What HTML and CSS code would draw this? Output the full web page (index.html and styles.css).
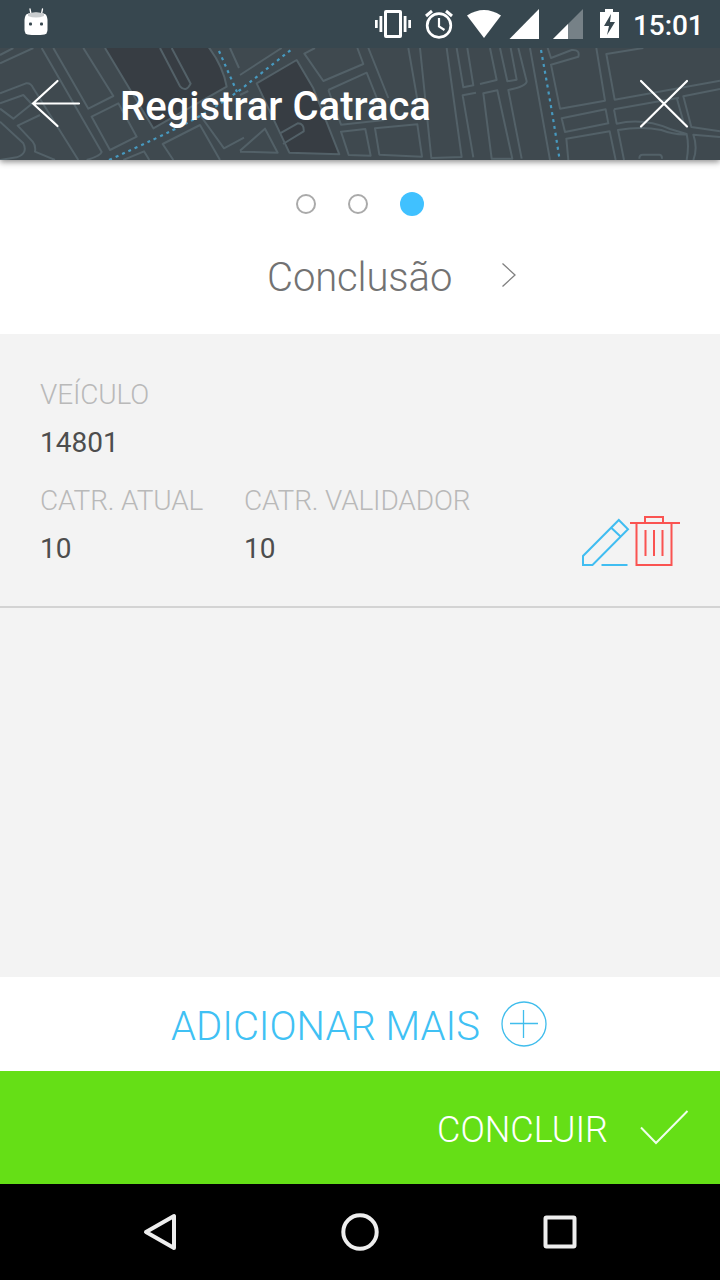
FILE: index.html
```html
<!DOCTYPE html>
<html lang="pt-BR">
<head>
<meta charset="utf-8">
<title>Registrar Catraca</title>
<link rel="stylesheet" href="styles.css">
</head>
<body>
<div class="screen">
  <div class="status-bar">
    <svg class="robot" width="24" height="28" viewBox="24 8 24 28">
      <path d="M30 9l1 5M42.500 9l-1 5" stroke="#fff" stroke-width="1.300" stroke-linecap="round"/>
      <path d="M27 14q9-3 18 0 2 1 2.500 6v10q-.5 4-3 4.500-8.500 1.200-17 0-2.500-.5-3-4.500V20q.5-5 2.500-6z" fill="#fff"/>
      <path d="M28 13.500q8-2 16 0v2.500q-8 3-16 0z" fill="#c9cdcf"/>
      <rect x="29" y="22.500" width="3" height="3" rx="1" fill="#37474f"/><rect x="40" y="22.500" width="3" height="3" rx="1" fill="#37474f"/>
    </svg>
    <svg class="status-icons" width="250" height="48" viewBox="372 0 250 48" fill="#fff">
      <path fill-rule="evenodd" d="M386 10h14a2 2 0 0 1 2 2v24a2 2 0 0 1-2 2h-14a2 2 0 0 1-2-2V12a2 2 0 0 1 2-2zm1 3v22h12V13z"/>
      <path d="M379.500 16h2.800v16h-2.800zM375 20h2.700v8H375zM403.700 16h2.800v16h-2.800zM408.300 20h2.700v8h-2.700z"/>
      <g fill="none" stroke="#fff"><circle cx="439" cy="25.500" r="11.800" stroke-width="2.700"/><path d="M439 18v8.500l5.500 3.500" stroke-width="2.200"/><path d="M426 16l6-5M452 16l-6-5" stroke-width="3"/></g>
      <path d="M467 15.500Q484 4.500 501 15.500L484 38z"/>
      <path d="M509.500 39H539V9z"/>
      <path d="M553 39h30V9z" fill="#768187"/><path d="M553 39h15V24z"/>
      <path fill-rule="evenodd" d="M605 9h8v3h6v26h-19V12h5zm6 5l-7 12h5l-2 9 8-13h-5z"/>
    </svg>
    <span class="clock">15:01</span>
  </div>

  <header class="header">
    <svg class="map" width="720" height="112" viewBox="0 48 720 112">
      <g class="streets" transform="scale(.33333)">
        <path class="block" d="M315 144L460 385 680 260Q670 200 625 140"/>
        <path d="M480 144l60 115q18 20 32-8l-57-107"/>
        <path d="M0 165l40-21M0 190l100-46M125 144l180 312q-4 12-45 24M160 144l105 182 75-38-90-144M275 350l80-40 55 100-80 40zM0 280l78-30q15-2 22 15l135 215M0 310l70-25 25 27-55 44-40-30M0 365l70 65q15 30-20 42l-50 8M120 345l-67 32 45 48q10 12 7 30l60 25M520 480l-32-48 112-57 60 105M370 480l62-26 16 26M600 345l72 100 60-32M690 144l27 60"/>
      </g>
      <g class="streets" transform="translate(240 40) scale(.33333)">
        <path class="block" d="M50 130L170 60l50 85 78 198-150-5z"/>
        <path d="M120 280l53-30q20 0 18 24l-62 38M0 105l125-81M225 24l-32 17 57 82 120-51-18-48M265 150l115-52 40 100M265 150l38 104 130-14M385 24l60 150M303 275l73-8 16 80-66-2zM405 265l127-12 14 97-128-6zM505 24l28 160M540 24l34 330 91-3-45-327M650 24l20 118 30-6-18-112M700 352l-32-186 40-8M0 335l113 3-38-72-75 66M0 165l25-12"/>
      </g>
      <g class="streets" transform="translate(480 40) scale(.33333)">
        <path d="M0 132l50-12-20-96M60 24l22 100 28-5-18-95M115 24l25 100q-1 15-55 26l40 206M35 356L10 160l42-9 45 205zM150 24l60 336M203 24l10 30 62-24q26-2 20 20l-82 24 27 132 135-24-26-158M490 24l-111 18 25 137 316-57M245 235l132-27 8 42-130 26zM402 208l195-35M590 173l22 78M402 208l8 43q80-18 160 16l50 15q8 35 0 78M720 147l-110 22 24 92 86 13M265 360l-6-64 130-22 18 86M432 360l-18-90q70-12 130 0 40 15 75 13M720 291l-80-7q14 40 0 76M478 356q0-12 10-12h50q8 0 8 12"/>
      </g>
      <g class="routes"><path d="M109 160Q160 137 187 123T240 90L292 49M219 51l18 41M541 50q11 60 18.500 109"/></g>
    </svg>
    <svg class="back" width="50" height="50" viewBox="0 0 50 50"><path d="M48 24.500H2M26.500 2L2 24.500 26.500 47"/></svg>
    <h1 class="title">Registrar Catraca</h1>
    <svg class="close" width="50" height="50" viewBox="0 0 50 50"><path d="M2 2l46 45.500M48 2L2 47.500"/></svg>
  </header>

  <section class="steps">
    <div class="dots"><i class="dot"></i><i class="dot"></i><i class="dot active"></i></div>
    <div class="step">
      <span class="step-name">Conclusão</span>
      <svg class="chevron" width="16" height="26" viewBox="0 0 16 26"><path d="M1.500 1.500L14 13 1.500 24.500"/></svg>
    </div>
  </section>

  <main class="list">
    <article class="item">
      <dl class="field"><dt class="label">VEÍCULO</dt><dd class="value">14801</dd></dl>
      <div class="row">
        <dl class="field current"><dt class="label">CATR. ATUAL</dt><dd class="value">10</dd></dl>
        <dl class="field"><dt class="label">CATR. VALIDADOR</dt><dd class="value">10</dd></dl>
        <svg class="actions" width="100" height="54" viewBox="580 514 100 54">
          <path class="edit" d="M583 565v-9l35.800-36 9.200 9.200L592.500 565zM611.500 528l9 8.500M601.500 565H627.500"/>
          <path class="trash" d="M630 523h50M636.500 523v42h35v-42M645 523v-6h18v6M645.500 530v26M654 530v26M662.500 530v26"/>
        </svg>
      </div>
    </article>
  </main>

  <div class="add">
    <span class="add-text">ADICIONAR MAIS</span>
    <svg class="plus" width="46" height="46" viewBox="0 0 46 46"><circle cx="23" cy="23" r="22"/><path d="M22.500 9v28M9 22.500h28"/></svg>
  </div>
  <div class="finish">
    <span class="finish-text">CONCLUIR</span>
    <svg class="check" width="50" height="36" viewBox="0 0 50 36"><path d="M2 17.500L17 33 48.500 1"/></svg>
  </div>
  <nav class="nav">
    <svg width="720" height="96" viewBox="0 1184 720 96"><path d="M174 1216v32l-28-16z"/><circle cx="360" cy="1232" r="16.700"/><rect x="545.500" y="1217.500" width="29" height="29" rx="1"/></svg>
  </nav>
</div>
</body>
</html>
```
FILE: styles.css
```css
* { box-sizing: border-box; }
body { margin: 0; font-family: Roboto, "Liberation Sans", sans-serif; }
svg { display: block; flex: none; }
.screen { width: 720px; height: 1280px; display: flex; flex-direction: column; background: #f3f3f3; overflow: hidden; }
.status-bar { height: 48px; flex: none; position: relative; z-index: 2; background: #37474f; display: flex; padding-left: 24px; color: #fff; }
.robot { margin-top: 8px; }
.status-icons { margin-left: 324px; }
.clock { margin-left: 11px; font-size: 28px; font-weight: 500; line-height: 52px; letter-spacing: -0.1px; white-space: nowrap; }
.header { height: 112px; flex: none; position: relative; z-index: 1; display: flex; align-items: center; padding: 0 31px; background: #3f494f; box-shadow: 0 2px 6px rgba(0,0,0,.45); }
.map { position: absolute; left: 0; top: 0; }
.streets { fill: none; stroke: #536168; stroke-width: 6; stroke-linejoin: round; }
.block { fill: #373d43; }
.routes { fill: none; stroke: #4799bf; stroke-width: 2.200; stroke-dasharray: 3 4; }
.back, .close { position: relative; fill: none; stroke: #fff; stroke-width: 2.200; stroke-linecap: round; }
.title { position: relative; margin: 6px auto 0 39px; color: #fff; font-size: 40px; font-weight: 500; line-height: 48px; white-space: nowrap; }
.steps { height: 174px; flex: none; background: #fff; padding-top: 32px; }
.dots { display: flex; align-items: center; justify-content: center; gap: 32px; height: 24px; }
.dot { width: 20px; height: 20px; border: 2px solid #aaa; border-radius: 50%; }
.dot.active { width: 24px; height: 24px; border: 0; background: #40c1ff; }
.step { display: flex; align-items: center; padding-left: 267px; margin-top: 38px; height: 48px; }
.step-name { width: 234px; font-size: 40px; font-weight: 300; line-height: 48px; letter-spacing: -0.1px; color: #727272; }
.chevron { margin-top: -7px; fill: none; stroke: #808080; stroke-width: 1.300; }
.list { flex: 1; background: #f3f3f3; }
.item { height: 274px; padding: 37px 40px 33px; border-bottom: 2px solid #d3d3d3; }
.field { margin: 0; font-size: 28px; line-height: 48px; white-space: nowrap; }
.label { font-weight: 300; letter-spacing: -0.15px; color: #b9b9b9; }
.value { margin: 0; color: #4d4d4d; }
.row { display: flex; margin-top: 10px; }
.current { width: 204px; }
.actions { margin: 37px 0 0 auto; fill: none; stroke-width: 2; }
.edit { stroke: #40bdf1; }
.trash { stroke: #fa5351; }
.add { height: 94px; flex: none; background: #fff; display: flex; align-items: center; padding-left: 171px; color: #40c1f4; }
.add-text { width: 330px; margin-top: 6px; font-size: 40px; font-weight: 300; line-height: 48px; white-space: nowrap; }
.plus { fill: none; stroke: #40bdec; stroke-width: 1.300; }
.finish { height: 113px; flex: none; background: #65df16; display: flex; align-items: center; padding-left: 437px; color: #fff; }
.finish-text { width: 202px; margin-top: 4px; font-size: 36px; font-weight: 300; line-height: 48px; }
.check { fill: none; stroke: #efffeb; stroke-width: 2; }
.nav { height: 96px; flex: none; background: #000; fill: none; stroke: #eee; stroke-width: 4; stroke-linejoin: round; }
```
